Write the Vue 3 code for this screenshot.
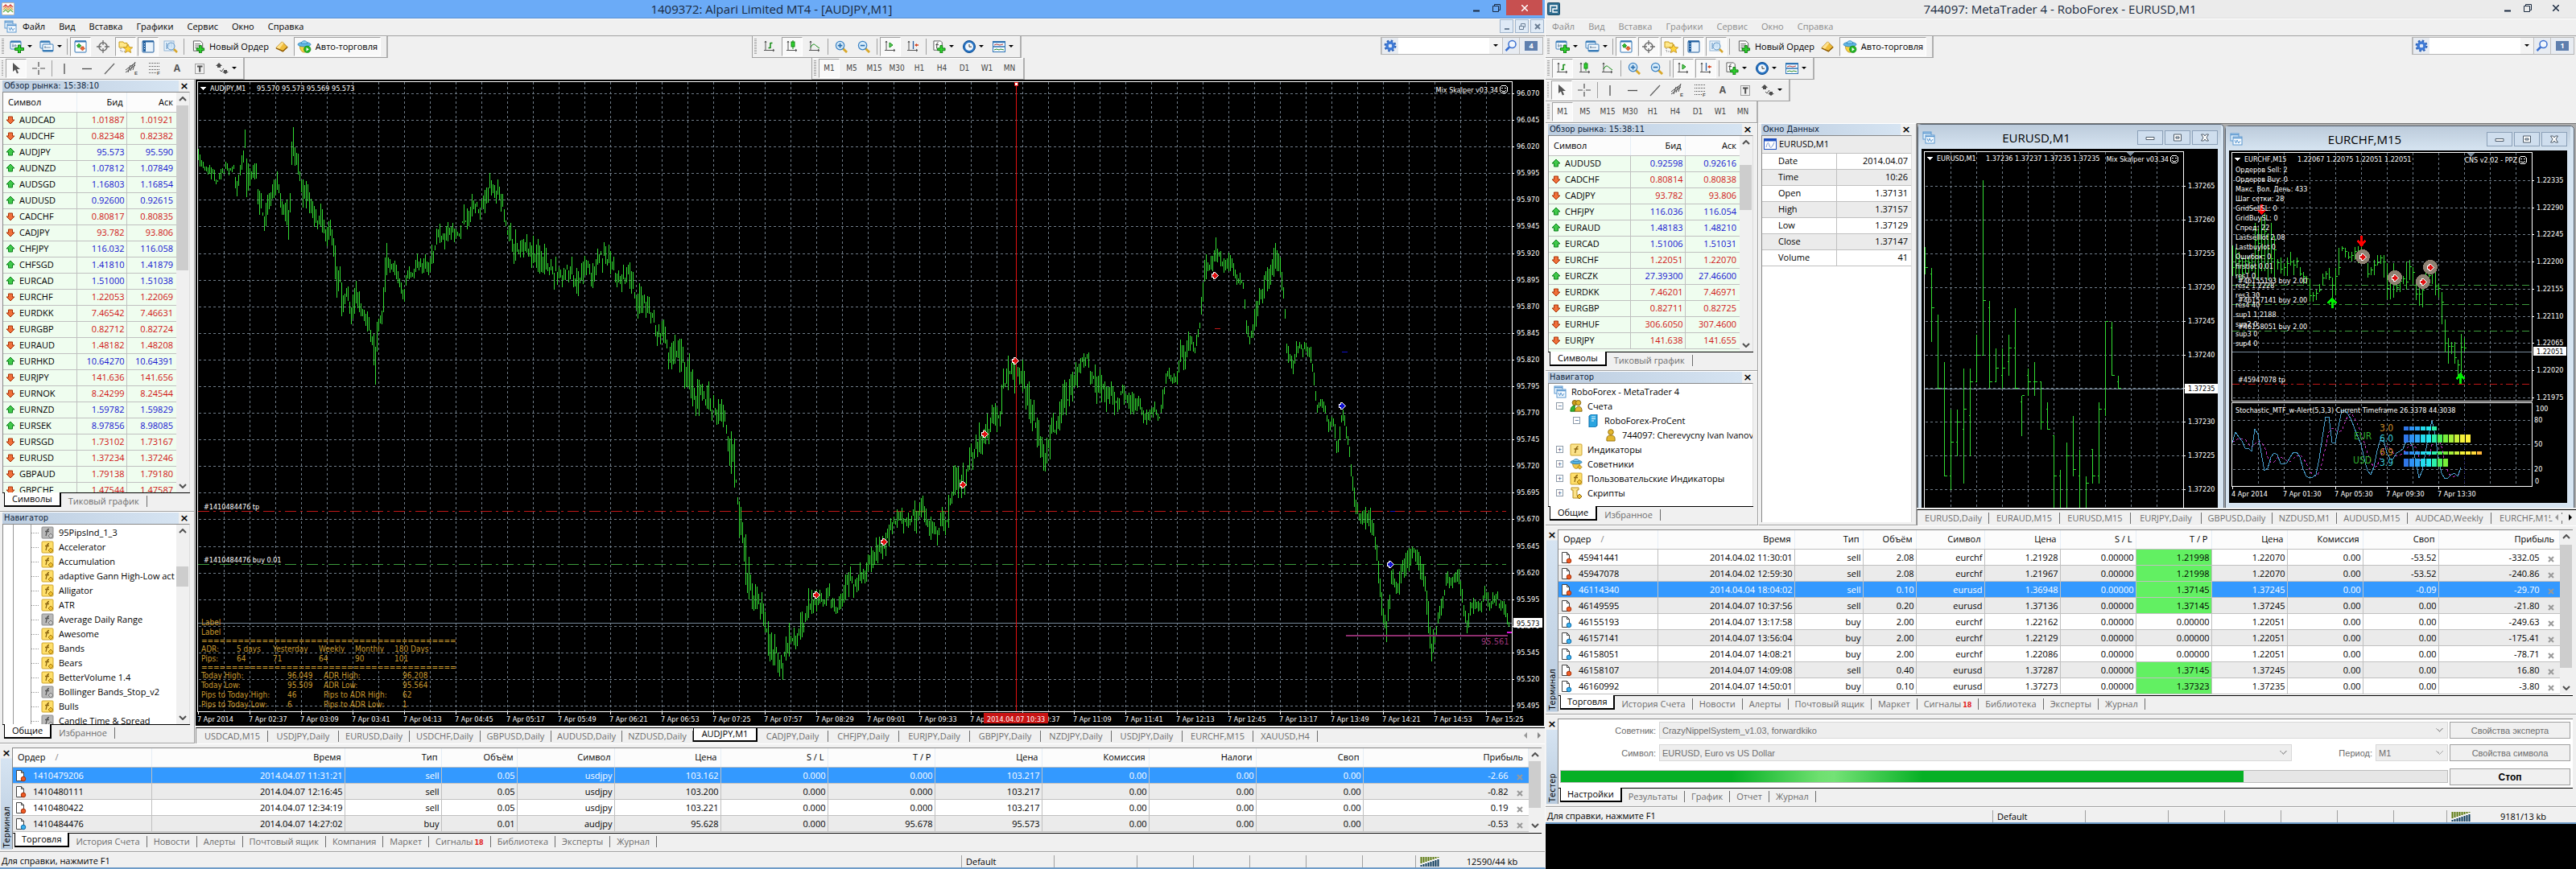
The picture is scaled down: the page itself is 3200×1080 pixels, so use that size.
<template>
  <svg class="sprite" aria-hidden="true">
    <symbol id="i-charts" viewBox="0 0 16 16">
      <rect x="1" y="1" width="10" height="9" fill="#eaf4fd" stroke="#5b97cf" />
      <path d="M1 2.5h10" stroke="#5b97cf" stroke-width="1.5" />
      <rect x="4" y="5" width="11" height="10" fill="#f6fbff" stroke="#5b97cf" />
      <path d="M4 6.5h11" stroke="#5b97cf" stroke-width="1.5" />
      <path d="M6 9l1.5 4L9 9l2 4 2-3" fill="none" stroke="#5b97cf" />
    </symbol>
    <symbol id="i-newchart" viewBox="0 0 18 16">
      <rect x="1" y="1" width="13" height="10" rx="1" fill="#f4fafe" stroke="#3b7db8" />
      <path d="M1 2h13" stroke="#3b7db8" stroke-width="2" />
      <path d="M4 4v5M3 7h6M7 5v3" stroke="#6c8aa5" />
      <path d="M10.500 6h3v3.500h4v3h-4v3.500h-3v-3.500h-4v-3h4z" fill="#2fd12f" stroke="#0b7a0b" />
    </symbol>
    <symbol id="i-profiles" viewBox="0 0 18 16">
      <rect x="1" y="1" width="12" height="9" rx="1" fill="#eaf4fd" stroke="#3b7db8" />
      <rect x="4" y="5" width="13" height="9" rx="1" fill="#f6fbff" stroke="#3b7db8" />
      <path d="M1 2h12M4 13h13" stroke="#3b7db8" stroke-width="2" />
      <path d="M7 7v3M6 9h8" stroke="#6c8aa5" />
    </symbol>
    <symbol id="i-market" viewBox="0 0 16 16">
      <rect x="1" y="1" width="14" height="14" rx="1" fill="#fff" stroke="#2f74b5" />
      <path d="M1 1.500h14" stroke="#2f74b5" stroke-width="2" />
      <path d="M6 4l3 3H7.500v2h-3V7H3z" fill="#2fbf2f" stroke="#0b7a0b" stroke-width=".6" />
      <path d="M10.500 13l-3-3H9V8h3v2h1.500z" fill="#f06a35" stroke="#a83208" stroke-width=".6" />
    </symbol>
    <symbol id="i-cross" viewBox="0 0 16 16">
      <circle cx="8" cy="8" r="5" fill="none" stroke="#6d6d6d" stroke-width="1.500" />
      <path d="M8 0v6M8 10v6M0 8h6M10 8h6" stroke="#6d6d6d" stroke-width="1.300" />
    </symbol>
    <symbol id="i-navig" viewBox="0 0 18 16">
      <path d="M1 2h5l1 1.500h4V9H1z" fill="#ffe88a" stroke="#c79a1a" />
      <path d="M3 10v4h5" stroke="#777" fill="none" stroke-dasharray="1 1" />
      <path d="M12 5l1.700 3.600 4 .4-3 2.600.9 3.900L12 13.500l-3.500 2 .9-3.900-3-2.600 4-.4z" fill="#ffd53a" stroke="#b98512" stroke-width=".8" />
    </symbol>
    <symbol id="i-term" viewBox="0 0 16 16">
      <rect x="1" y="1" width="14" height="14" rx="1" fill="#e9f3fc" stroke="#205f9f" />
      <rect x="2" y="2" width="3" height="12" fill="#1f5fa0" />
      <path d="M1 1.500h14" stroke="#205f9f" stroke-width="2" />
      <path d="M3.500 4v8" stroke="#fff" stroke-dasharray="1 2" />
    </symbol>
    <symbol id="i-tester" viewBox="0 0 18 16">
      <rect x="1" y="1" width="12" height="12" fill="#eef6fd" stroke="#8fb4d6" />
      <path d="M4 3v8M7 3v5M10 3v6" stroke="#4c86bd" />
      <circle cx="9.500" cy="7.500" r="4.500" fill="#cfe6f8" fill-opacity=".8" stroke="#5f93c4" />
      <path d="M13 11l4 4" stroke="#d7a62c" stroke-width="2.500" />
    </symbol>
    <symbol id="i-order" viewBox="0 0 16 17">
      <path d="M1 1h9l3 3v10H1z" fill="#fff" stroke="#555" />
      <path d="M3 5h7M3 7.500h7M3 10h4" stroke="#555" />
      <path d="M8.500 7h3v3.500H15v3h-3.500V17h-3v-3.500H5v-3h3.500z" fill="#2fd12f" stroke="#0b7a0b" />
    </symbol>
    <symbol id="i-gold" viewBox="0 0 17 15">
      <path d="M1 9L9 1l7 7-6 6z" fill="#f0bd3c" stroke="#a8720a" />
      <path d="M1 9l8-8 2 2-6 8z" fill="#ffe18a" />
      <path d="M1 9.500l9 4 6-5.500" fill="none" stroke="#8f5c05" stroke-width="1.500" />
    </symbol>
    <symbol id="i-auto" viewBox="0 0 18 17">
      <path d="M3 7c0 6 3 9 6 9s6-3 6-9z" fill="#f7d13d" stroke="#b48a12" stroke-width=".8" />
      <ellipse cx="9" cy="5.500" rx="8.500" ry="3" fill="#62b7e6" stroke="#2a7cb4" stroke-width=".8" />
      <path d="M5 4.500c0-5 8-5 8 0z" fill="#8ad0f2" stroke="#2a7cb4" stroke-width=".8" />
      <circle cx="13" cy="12" r="4.500" fill="#23b423" stroke="#0d7a0d" stroke-width=".6" />
      <path d="M11.700 9.500v5l3.500-2.500z" fill="#fff" />
    </symbol>
    <symbol id="i-pointer" viewBox="0 0 12 16">
      <path d="M2 1v11l3-2.500 2 5 2-1-2-4.500h4z" fill="#555" />
    </symbol>
    <symbol id="i-plus" viewBox="0 0 16 16"><path d="M8 0v6M8 10v6M0 8h6M10 8h6M8 8v.500" stroke="#4d4d4d" stroke-width="1.200" /></symbol>
    <symbol id="i-vline" viewBox="0 0 16 16"><path d="M8 2v13" stroke="#4d4d4d" stroke-width="1.300" /></symbol>
    <symbol id="i-hline" viewBox="0 0 16 16"><path d="M2 8.500h12" stroke="#4d4d4d" stroke-width="1.300" /></symbol>
    <symbol id="i-trend" viewBox="0 0 16 16"><path d="M2 15L14 2" stroke="#666" stroke-width="1.300" /></symbol>
    <symbol id="i-equi" viewBox="0 0 16 16">
      <path d="M0 13L12 4M0 10L12 1M3 13L6 4M6 11l3-8M9 10l3-10" stroke="#4d4d4d" />
      <text x="11" y="16" class="glyph">E</text>
    </symbol>
    <symbol id="i-fibo" viewBox="0 0 16 16">
      <path d="M1 1.500h14M1 5.500h14M1 9.500h14M1 13.500h9" stroke="#4d4d4d" stroke-dasharray="1 1" />
      <text x="11" y="16" class="glyph">F</text>
    </symbol>
    <symbol id="i-label" viewBox="0 0 16 16">
      <rect x="2.500" y="2.500" width="11" height="12" fill="none" stroke="#4d4d4d" stroke-dasharray="1 1" />
      <path d="M5 5.500h6.500M8.200 5v7.500" stroke="#4d4d4d" stroke-width="2" />
    </symbol>
    <symbol id="i-shapes" viewBox="0 0 16 16">
      <path d="M4 1l4 4H6v2H2V5H0zM12 15l-4-3h2v-2h4v2h2z" fill="#4d4d4d" />
      <path d="M5 10l2 2 3-4" stroke="#4d4d4d" fill="none" />
    </symbol>
    <symbol id="i-bars" viewBox="0 0 16 16">
      <path d="M3 1v12M1 12.500h13M2 3l1-2 1 2M12 11l2 1.500-2 1.500" stroke="#555" fill="none" />
      <path d="M9 3v7M9 3.500h2.500M6.500 9.500H9" stroke="#118a11" stroke-width="1.500" />
    </symbol>
    <symbol id="i-candle" viewBox="0 0 16 16">
      <path d="M3 1v12M1 12.500h13M2 3l1-2 1 2M12 11l2 1.500-2 1.500" stroke="#555" fill="none" />
      <path d="M9 0v11" stroke="#118a11" /><rect x="7" y="2" width="4" height="6" fill="#2fd12f" stroke="#118a11" />
    </symbol>
    <symbol id="i-line" viewBox="0 0 16 16">
      <path d="M3 1v12M1 12.500h13M2 3l1-2 1 2M12 11l2 1.500-2 1.500" stroke="#555" fill="none" />
      <path d="M3 9c3-6 5-4 7-2l4 3" stroke="#118a11" fill="none" />
    </symbol>
    <symbol id="i-zin" viewBox="0 0 17 17">
      <path d="M10 10l6 6" stroke="#d9a82b" stroke-width="3" />
      <circle cx="7" cy="7" r="5.500" fill="#d8edfb" stroke="#3d83c4" stroke-width="1.300" /><path d="M4 7h6M7 4v6" stroke="#2a6fb0" stroke-width="1.800" />
    </symbol>
    <symbol id="i-zout" viewBox="0 0 17 17">
      <path d="M10 10l6 6" stroke="#d9a82b" stroke-width="3" />
      <circle cx="7" cy="7" r="5.500" fill="#d8edfb" stroke="#3d83c4" stroke-width="1.300" /><path d="M4 7h6" stroke="#2a6fb0" stroke-width="1.800" />
    </symbol>
    <symbol id="i-scroll" viewBox="0 0 16 16">
      <path d="M3 1v12M1 12.500h13M2 3l1-2 1 2M12 11l2 1.500-2 1.500" stroke="#555" fill="none" />
      <path d="M7 3v6l4-3z" fill="#5fd35f" stroke="#118a11" />
    </symbol>
    <symbol id="i-shift" viewBox="0 0 16 16">
      <path d="M3 1v12M1 12.500h13M2 3l1-2 1 2M12 11l2 1.500-2 1.500" stroke="#555" fill="none" />
      <path d="M8.500 1v10" stroke="#2a5fa0" stroke-width="1.300" /><path d="M10 6l3-2v1.300h2v1.400h-2V8z" fill="#d4401a" />
    </symbol>
    <symbol id="i-indic" viewBox="0 0 17 17">
      <path d="M1 1h9l2 2v10H1z" fill="#fff" stroke="#555" /><path d="M7 3c-2 0-2 2-2 4v4M3.500 6h4" stroke="#333" fill="none" />
      <path d="M9.500 7h3v3.500H16v3h-3.500V17h-3v-3.500H6v-3h3.500z" fill="#2fd12f" stroke="#0b7a0b" />
    </symbol>
    <symbol id="i-clock" viewBox="0 0 16 16">
      <circle cx="8" cy="8" r="7.500" fill="#2874c4" stroke="#0f4d8f" /><circle cx="8" cy="8" r="5" fill="#f2f8fd" />
      <path d="M8 5v3.200h3" stroke="#333" fill="none" />
    </symbol>
    <symbol id="i-templ" viewBox="0 0 16 14">
      <rect x=".5" y=".5" width="15" height="13" fill="#f6fbff" stroke="#2f74b5" /><path d="M0 1.500h16M0 7h16" stroke="#2f74b5" stroke-width="1.500" />
      <path d="M2 5l3-1 4 1 4-1" stroke="#b04040" fill="none" /><path d="M2 11l3-1 3 1 2-1 4 1" stroke="#2a8a2a" fill="none" />
    </symbol>
    <symbol id="i-gear" viewBox="0 0 16 16">
      <circle cx="8" cy="8" r="6" fill="none" stroke="#2d62b8" stroke-width="3" stroke-dasharray="2.400 2.310" />
      <circle cx="8" cy="8" r="4" fill="none" stroke="#3f7ad6" stroke-width="3.500" /><circle cx="8" cy="8" r="2" fill="#dce9fb" />
    </symbol>
    <symbol id="i-find" viewBox="0 0 16 16">
      <circle cx="9.500" cy="6" r="4.500" fill="#f2f7fe" stroke="#3a6fd0" stroke-width="1.500" /><path d="M6 9.500L1.500 14" stroke="#3a6fd0" stroke-width="2.500" />
    </symbol>
    <symbol id="i-up" viewBox="0 0 12 12">
      <path d="M6 1l5 5H8.500v4h-5V6H1z" fill="#3fc94a" stroke="#0f7f1c" />
    </symbol>
    <symbol id="i-down" viewBox="0 0 12 12">
      <path d="M6 11L1 6h2.500V2h5v4H11z" fill="#f0703a" stroke="#a83208" />
    </symbol>
    <symbol id="i-fx" viewBox="0 0 16 16">
      <rect x="1" y="1" width="14" height="14" rx="1" fill="#ffdf6a" stroke="#cfa52c" />
      <path d="M10 3.500c-3 0-2.500 3-4 8.500M5 6.500h5" stroke="#8a6410" stroke-width="1.300" fill="none" />
      <path d="M12 9l3 3-3 3-3-3z" fill="#f0c030" stroke="#a87c10" />
    </symbol>
    <symbol id="i-fxg" viewBox="0 0 16 16">
      <rect x="1" y="1" width="14" height="14" rx="1" fill="#b9b9b9" stroke="#8d8d8d" />
      <path d="M10 3.500c-3 0-2.500 3-4 8.500M5 6.500h5" stroke="#555" stroke-width="1.300" fill="none" />
      <path d="M12 9l3 3-3 3-3-3z" fill="#c8c8c8" stroke="#777" />
    </symbol>
    <symbol id="i-fx0" viewBox="0 0 16 16">
      <rect x="1" y="1" width="14" height="14" rx="1" fill="#fbe28a" stroke="#cfa52c" />
      <path d="M10.500 4c-3 0-2.500 3-4 8M5.500 7h5" stroke="#8a6410" stroke-width="1.300" fill="none" />
    </symbol>
    <symbol id="i-sell" viewBox="0 0 14 16">
      <path d="M1.500 1.500h6l3 3v10h-9z" fill="#fff" stroke="#444" /><path d="M7.500 1.500v3h3" fill="none" stroke="#444" /><circle cx="10" cy="12" r="2.800" fill="#ee5a24" stroke="#a83208" />
    </symbol>
    <symbol id="i-buy" viewBox="0 0 14 16">
      <path d="M1.500 1.500h6l3 3v10h-9z" fill="#fff" stroke="#444" /><path d="M7.500 1.500v3h3" fill="none" stroke="#444" /><circle cx="10" cy="12" r="2.800" fill="#38b0ee" stroke="#0d6aa8" />
    </symbol>
    <symbol id="i-users" viewBox="0 0 18 18">
      <circle cx="7" cy="4" r="3.500" fill="#c99a1c" stroke="#7a5a08" /><circle cx="12" cy="4" r="3.500" fill="#e3b72e" stroke="#7a5a08" />
      <path d="M1 16c0-6 3-8 6-8v8z" fill="#35b435" stroke="#0d7a0d" /><path d="M7 16c0-7 10-11 10 0z" fill="#e3b72e" stroke="#7a5a08" />
    </symbol>
    <symbol id="i-user" viewBox="0 0 16 16">
      <circle cx="8" cy="4" r="3.300" fill="#e3b72e" stroke="#9c7612" /><path d="M3 15c-1-7 3-7 5-7s6 0 5 7z" fill="#e3b72e" stroke="#9c7612" />
    </symbol>
    <symbol id="i-server" viewBox="0 0 14 16">
      <path d="M2 2l3-2h7v14l-3 2H2z" fill="#2aa5e0" stroke="#0d6aa8" /><path d="M5 3h5M5 5.500h5M5 8h3" stroke="#e6f6ff" />
    </symbol>
    <symbol id="i-hat" viewBox="0 0 18 16">
      <path d="M4 6c0 5 2 8 5 8s5-3 5-8z" fill="#f2c94a" stroke="#a87c10" stroke-width=".8" /><ellipse cx="9" cy="5" rx="8" ry="2.600" fill="#52b2e4" stroke="#22709f" stroke-width=".8" />
      <path d="M5 4c0-4.500 8-4.500 8 0z" fill="#86cff2" stroke="#22709f" stroke-width=".8" /><path d="M14 9l3 3-3 3-3-3z" fill="#f0c030" stroke="#8a6410" stroke-width=".8" />
    </symbol>
    <symbol id="i-script" viewBox="0 0 16 16">
      <path d="M2 1h9v3H9v7h3v3H4V4H2z" fill="#fbe28a" stroke="#b8901e" /><path d="M12 9l3 3-3 3-3-3z" fill="#f0c030" stroke="#8a6410" />
    </symbol>
    <symbol id="i-wave" viewBox="0 0 16 14">
      <rect x=".5" y=".5" width="15" height="13" fill="#fff" stroke="#1d4fbf" /><path d="M0 2h16" stroke="#1d4fbf" stroke-width="3" /><path d="M3 11c2-8 3-6 4-2s3 3 6-4" stroke="#6d8ccf" fill="none" />
    </symbol>
    <symbol id="i-conn" viewBox="0 0 24 12">
      <path d="M1.500 0v8M4.500 0v7M7.500 0v6M10.500 0v5M13.500 0v4M16.500 0v3M19.500 0v2M22.500 0v1" stroke="#5d7a10" stroke-width="2" />
      <path d="M1.500 12v-2M4.500 12V9M7.500 12V8M10.500 12V7M13.500 12V6M16.500 12V5M19.500 12V4M22.500 12V3" stroke="#0c3a5c" stroke-width="2" />
    </symbol>
    <symbol id="i-smile" viewBox="0 0 12 12">
      <circle cx="6" cy="6" r="5" fill="none" stroke="#fff" /><circle cx="4" cy="4.500" r=".8" fill="#fff" /><circle cx="8" cy="4.500" r=".8" fill="#fff" /><path d="M3 7c1 2.500 5 2.500 6 0" fill="none" stroke="#fff" />
    </symbol>
    <symbol id="i-deal" viewBox="0 0 9 9"><path d="M2.500 2.500V.500h2L8.500 4.500 4.500 8.500h-2v-2h-2v-4z" fill="currentColor" stroke="#fff" /></symbol>
  </svg>

  <div class="desktop">
    <main v-for="app in apps" :key="app.id" class="slot">
      <section class="app" :class="app.id">
        <header class="titlebar">
          <span class="logo"><svg viewBox="0 0 16 16" width="16" height="16">
            <g v-if="app.id === 'left'">
              <rect x=".5" y=".5" width="15" height="15" rx="1" fill="#fff" stroke="#c9b8a0" />
              <path d="M2 6l3-3 3 3 3-3 3 3" fill="none" stroke="#d9534a" stroke-width="1.500" /><path d="M2 9l3-3 3 3 3-3 3 3" fill="none" stroke="#e0a040" stroke-width="1.300" /><path d="M2 12l3-3 3 3 3-3 3 3" fill="none" stroke="#6ab04a" stroke-width="1.300" />
            </g>
            <g v-else>
              <rect x=".5" y=".5" width="15" height="15" rx="1" fill="#2f6d90" stroke="#1c4c68" />
              <path d="M4 12V4h8v4H7v4h6" fill="none" stroke="#fff" stroke-width="1.500" />
            </g>
          </svg></span>
          <h1>{{ app.title }}</h1>
          <div class="wbtns">
            <button aria-label="Свернуть"><svg width="10" height="10"><path d="M1 8.500h8" stroke="currentColor" stroke-width="2" /></svg></button>
            <button aria-label="Развернуть"><svg width="10" height="10"><path d="M.500 2.500h7v7h-7zM2.500 2V.500h7v7H8" fill="none" stroke="currentColor" /></svg></button>
            <button class="shut" aria-label="Закрыть"><svg width="8" height="8"><path d="M0 0l8 8M8 0L0 8" stroke="currentColor" stroke-width="1.500" /></svg></button>
          </div>
        </header>
        <nav class="menu">
          <svg v-if="app.id === 'left'" class="ic" width="16" height="16"><use href="#i-charts" /></svg>
          <button v-for="m in menu" :key="m">{{ m }}</button>
          <div v-if="app.id === 'left'" class="mdi">
            <button aria-label="Свернуть график"><svg width="8" height="8"><path d="M1 7h6" stroke="#6b7f95" stroke-width="2" /></svg></button>
            <button aria-label="Восстановить график"><svg width="8" height="8"><path d="M.500 3.500h5v4h-5zM2.500 3V.500h5v4H6" fill="none" stroke="#6b7f95" /></svg></button>
            <button aria-label="Закрыть график"><svg width="8" height="8"><path d="M1 1l6 6M7 1L1 7" stroke="#6b7f95" stroke-width="2" /></svg></button>
          </div>
        </nav>
        <div v-for="(row, ri) in app.bands" :key="ri" class="band">
          <div v-for="bar in row" :key="bar" class="bar" :class="bar">
            <i class="grip"></i>
            <template v-for="(b, bi) in bars[bar]" :key="bi">
              <i v-if="b.sep" class="sep"></i>
              <button v-else :class="{ on: app.pressed.includes(b.i || b.t), caret: b.c, wide: b.w, order: b.i === 'order' }" :aria-label="b.t || b.i">
                <svg v-if="b.i" :width="b.s || 16" height="16"><use :href="'#i-' + b.i" /></svg>
                <span v-if="b.t">{{ b.t }}</span>
                <svg v-if="b.c" class="car" width="6" height="4"><path d="M0 0h6L3 3z" /></svg>
              </button>
            </template>
          </div>
          <div v-if="ri === 0" class="search">
            <button aria-label="Настройки"><svg width="16" height="16"><use href="#i-gear" /></svg></button>
            <input type="text" aria-label="Поиск" />
            <button class="drop" aria-label="Список"><svg width="6" height="4"><path d="M0 0h6L3 3z" /></svg></button>
            <button aria-label="Найти"><svg width="16" height="16"><use href="#i-find" /></svg></button>
            <button class="chat" aria-label="Сообщения"><b>{{ app.msgs }}</b></button>
          </div>
        </div>

        <div class="work">
          <div class="dock">
            <section class="panel watch">
              <h2><span>Обзор рынка: {{ app.clock }}</span><button aria-label="Закрыть">×</button></h2>
              <div class="body scrolls">
                <div class="clip">
                  <table class="grid">
                    <colgroup><col class="c1" /><col class="c2" /><col /></colgroup>
                    <thead><tr><th>Символ</th><th>Бид</th><th>Аск</th></tr></thead>
                    <tbody>
                      <tr v-for="q in app.quotes" :key="q[1]" :class="q[0]">
                        <td><svg width="12" height="12"><use :href="'#i-' + q[0]" /></svg>{{ q[1] }}</td><td>{{ q[2] }}</td><td>{{ q[3] }}</td>
                      </tr>
                    </tbody>
                  </table>
                </div>
                <div class="vscroll"><svg width="10" height="6"><path d="M1 5l4-4 4 4" /></svg><i class="thumb"></i><svg width="10" height="6"><path d="M1 1l4 4 4-4" /></svg></div>
              </div>
              <div class="tabs"><button class="cur">Символы</button><button>Тиковый график</button></div>
            </section>
            <section class="panel navi">
              <h2><span>Навигатор</span><button aria-label="Закрыть">×</button></h2>
              <div class="body scrolls">
                <ul v-if="app.id === 'left'" class="tree flat">
                  <li v-for="n in indicators" :key="n[1]"><svg width="16" height="16"><use :href="'#i-' + n[0]" /></svg>{{ n[1] }}</li>
                </ul>
                <ul v-else class="tree">
                  <li v-for="n in tree" :key="n.t" :class="'lv' + n.l"><i v-if="n.x" class="box">{{ n.x }}</i><svg width="16" height="16"><use :href="'#i-' + n.i" /></svg>{{ n.t }}</li>
                </ul>
                <div v-if="app.id === 'left'" class="vscroll"><svg width="10" height="6"><path d="M1 5l4-4 4 4" /></svg><i class="thumb"></i><svg width="10" height="6"><path d="M1 1l4 4 4-4" /></svg></div>
              </div>
              <div class="tabs"><button class="cur">Общие</button><button>Избранное</button></div>
            </section>
          </div>

          <section v-if="app.id === 'right'" class="panel datawin">
            <h2><span>Окно Данных</span><button aria-label="Закрыть">×</button></h2>
            <div class="body">
              <table class="data">
                <thead><tr><th colspan="2"><svg width="16" height="14"><use href="#i-wave" /></svg>EURUSD,M1</th></tr></thead>
                <tbody><tr v-for="d in dataRows" :key="d[0]"><td>{{ d[0] }}</td><td>{{ d[1] }}</td></tr></tbody>
              </table>
            </div>
          </section>

          <div class="stage">
            <div v-if="app.id === 'left'" class="solo">
              <svg class="chart" width="100%" height="100%">
                <g transform="translate(-243 -99)">
                  <path class="gl" :d="mainGrid" />
                  <path d="M246 774.500H1878" stroke="#778899" />
                  <path d="M246 635.500H1871" stroke="#c01818" stroke-dasharray="14 5 3 5" />
                  <path d="M246 701.500H1871" stroke="#3c9a3c" stroke-dasharray="14 5 3 5" />
                  <path class="px" :d="mainBars" />
                  <path d="M1672 790H1873" stroke="#8e2e6e" stroke-width="2" />
                  <path d="M1872 786h6" stroke="#e010e0" stroke-width="2" />
                  <text x="1840" y="801" class="lvl">95.561</text>
                  <path d="M1262.500 102V884" stroke="#e01010" />
                  <rect x="1260.500" y="102.500" width="4" height="4" fill="#fff" stroke="#e01010" />
                  <path d="M1509 408.500h7" stroke="#c01818" /><path d="M1667 437.500h7M1727 635.500h6" stroke="#1010c8" />
                  <use v-for="(m, k) in deals" :key="k" href="#i-deal" :x="m[0] - 4" :y="m[1] - 4" width="9" height="9" :style="{ color: m[2] }" />
                  <path d="M245.500 884.500V101.500H1878.500V884.500z" fill="none" stroke="#fff" />
                  <path :d="mainTicks" stroke="#fff" />
                  <g class="tx">
                    <path d="M249 108h7l-3.500 4z" />
                    <text x="261" y="113">AUDJPY,M1</text>
                    <text v-for="(p, k) in mainHead" :key="k" :x="319 + k * 31" y="113">{{ p }}</text>
                    <text x="1861" y="115" text-anchor="end">Mix Skalper v03.34</text>
                    <use href="#i-smile" x="1862" y="105" width="12" height="12" />
                    <text v-for="(p, k) in mainPrices" :key="p" x="1884" :y="119 + k * 33.09">{{ p }}</text>
                    <rect x="1880" y="768" width="36" height="12" />
                    <text x="1884" y="778" class="dk">95.573</text>
                    <text v-for="(t, k) in mainTimes" :key="t" :x="245 + k * 64" y="897">{{ t }}</text>
                    <rect x="1222" y="886" width="80" height="13" fill="#c81414" />
                    <text x="1226" y="897">2014.04.07 10:33</text>
                    <text x="253" y="633">#1410484476 tp</text>
                    <text x="253" y="699">#1410484476 buy 0.01</text>
                  </g>
                  <g class="adr"><text v-for="(a, k) in adr" :key="k" :x="a[0]" :y="a[1]">{{ a[2] }}</text></g>
                </g>
              </svg>
            </div>
            <div v-else class="mdiarea">
              <section class="child w1">
                <header><svg width="16" height="16"><use href="#i-charts" /></svg><h3>EURUSD,M1</h3><div class="cb"><button v-for="g in childBtns" :key="g[0]" :aria-label="g[0]"><svg width="12" height="10"><path :d="g[1]" /></svg></button></div></header>
                <svg class="chart" width="100%" height="100%">
                  <g transform="translate(-2387 -183)">
                    <path class="gl" :d="eurusdGrid" />
                    <path d="M2391 481.500H2712" stroke="#778899" />
                    <path class="px" :d="eurusdBars" />
                    <path d="M2390.500 640V186.500H2712.500V640" fill="none" stroke="#fff" />
                    <path :d="eurusdTicks" stroke="#fff" />
                    <path d="M2642 187h9l-4.500 5z" fill="#778899" />
                    <g class="tx">
                      <path d="M2394 193h7l-3.500 4z" />
                      <text x="2406" y="198">EURUSD,M1</text>
                      <text v-for="(p, k) in usdHead" :key="k" :x="2467 + k * 36" y="198">{{ p }}</text>
                      <text x="2694" y="199" text-anchor="end">Mix Skalper v03.34</text>
                      <use href="#i-smile" x="2695" y="190" width="12" height="12" />
                      <text v-for="(p, k) in eurusdPrices" :key="p" x="2718" :y="232 + k * 41.9">{{ p }}</text>
                      <rect x="2714" y="475" width="41" height="12" />
                      <text x="2718" y="484" class="dk">1.37235</text>
                    </g>
                  </g>
                </svg>
              </section>
              <section class="child w2">
                <header><svg width="16" height="16"><use href="#i-charts" /></svg><h3>EURCHF,M15</h3><div class="cb"><button v-for="g in childBtns" :key="g[0]" :aria-label="g[0]"><svg width="12" height="10"><path :d="g[1]" /></svg></button></div></header>
                <svg class="chart" width="100%" height="100%">
                  <g transform="translate(-2769 -187)">
                    <path class="gl" :d="eurchfGrid" />
                    <path d="M2773 437.500H3146" stroke="#778899" />
                    <path d="M2773 354.500H3142M2773 378.500H3142M2773 411.500H3142" stroke="#3c9a3c" stroke-dasharray="9 4 3 4" />
                    <path d="M2773 477.500H3142" stroke="#c01818" stroke-dasharray="9 4 3 4" />
                    <path class="px" :d="eurchfBars" />
                    <circle v-for="(c, k) in spots" :key="k" :cx="c[0]" :cy="c[1]" r="9" fill="#8e8172" />
                    <use v-for="(c, k) in spots" :key="'s' + k" href="#i-deal" :x="c[0] - 4" :y="c[1] - 4" width="9" height="9" class="sd" />
                    <path d="M2808 254v7h-4l5.500 6 5.500-6h-4v-7z" fill="#f00" />
                    <path d="M2933.500 293v11M2928.500 299l5 5.500 5-5.500" stroke="#f00" stroke-width="3" fill="none" />
                    <path d="M2897 383v-11M2892 377l5-5.500 5 5.500M3056.500 477v-11M3051.500 471l5-5.500 5 5.500" stroke="#0e0" stroke-width="3" fill="none" />
                    <path :d="stochSlow" fill="none" stroke="#c030c0" stroke-dasharray="3 3" />
                    <path :d="stochFast" fill="none" stroke="#48a0d0" />
                    <path d="M3061.500 531V604" stroke="#1a1a5a" stroke-dasharray="3 3" />
                    <rect v-for="(r, k) in meters" :key="'m' + k" :x="r.x" :y="r.y" width="6" :height="r.h" :fill="r.f" />
                    <g class="big">
                      <text x="2924" y="546" fill="#2fae2f">EUR</text><text x="2923" y="576" fill="#2fae2f">USD</text>
                      <text x="2956" y="536" fill="#c88a2a">3.0</text><text x="2956" y="549" fill="#3cc8d8">6.0</text>
                      <text x="2956" y="566" fill="#c88a2a">6.9</text><text x="2956" y="579" fill="#3cc8d8">3.9</text>
                    </g>
                    <path d="M2772.500 189.500H3145.500V498.500H2772.500zM2772.500 500.500H3145.500V604.500H2772.500z" fill="none" stroke="#fff" />
                    <path :d="eurchfTicks" stroke="#fff" />
                    <path d="M3065 190h9l-4.500 5z" fill="#778899" />
                    <g class="tx">
                      <path d="M2776 196h7l-3.500 4z" />
                      <text x="2788" y="201">EURCHF,M15</text>
                      <text v-for="(p, k) in chfHead" :key="k" :x="2854 + k * 36" y="201">{{ p }}</text>
                      <text x="3127" y="202" text-anchor="end">CNS v2.02 - PPZ</text>
                      <use href="#i-smile" x="3128" y="193" width="12" height="12" />
                      <text v-for="(c, k) in comments" :key="c" x="2777" :y="214 + k * 12">{{ c }}</text>
                      <text x="2780" y="352">#46155193 buy 2.00</text><text x="2780" y="376">#46157141 buy 2.00</text>
                      <text x="2780" y="409">#46158051 buy 2.00</text><text x="2780" y="475">#45947078 tp</text>
                      <text v-for="(p, k) in eurchfPrices" :key="p" x="3151" :y="227 + k * 33.7">{{ p }}</text>
                      <rect x="3147" y="431" width="41" height="11" /><text x="3151" y="440" class="dk">1.22051</text>
                      <text x="2777" y="513">Stochastic_MTF_w-Alert(5,3,3) Current Timeframe 26.3378 44.3038</text>
                      <text x="3150" y="511">100</text><text x="3148" y="525">80</text><text x="3148" y="555">50</text><text x="3148" y="586">20</text><text x="3149" y="601">0</text>
                      <text v-for="(t, k) in chfTimes" :key="t" :x="2772 + k * 64" y="617">{{ t }}</text>
                    </g>
                  </g>
                </svg>
              </section>
            </div>
            <div class="tabs charts">
              <button v-for="(t, k) in app.chartTabs" :key="k" :class="{ cur: t === app.current, short: t.length < 10, long: t.length > 12 }">{{ t }}</button>
              <span class="arr"><svg width="24" height="8"><path d="M4 0v8L0 4z" fill="#999" /><path d="M17 0v8l4-4z" :fill="app.id === 'left' ? '#888' : '#000'" /></svg></span>
            </div>
          </div>
        </div>

        <section class="toolbox">
          <div class="side"><button aria-label="Закрыть">×</button><h2>Терминал</h2></div>
          <div class="main">
            <div class="scrolls tablewrap">
              <table class="orders">
                <colgroup><col v-for="(w, k) in app.cols" :key="k" :style="{ width: w + 'px' }" /><col /></colgroup>
                <thead><tr><th v-for="(h, k) in app.heads" :key="k">{{ h }}<i v-if="k === 0" class="slash">/</i></th></tr></thead>
                <tbody>
                  <tr v-for="o in app.orders" :key="o[0]" :class="{ sel: o[0] === app.selected }">
                    <td v-for="(c, k) in o" :key="k" :class="{ hit: app.id === 'right' && k === 7 && c !== '0.00000' }"><svg v-if="k === 0" width="14" height="16"><use :href="'#i-' + o[2]" /></svg>{{ c }}<button v-if="k === o.length - 1" class="del" aria-label="Закрыть ордер"><svg width="8" height="8"><path d="M1 1l6 6M7 1L1 7" /></svg></button></td>
                  </tr>
                </tbody>
              </table>
              <div class="vscroll"><svg width="10" height="6"><path d="M1 5l4-4 4 4" /></svg><i class="thumb"></i><svg width="10" height="6"><path d="M1 1l4 4 4-4" /></svg></div>
            </div>
            <div class="tabs"><button v-for="(t, k) in app.termTabs" :key="t" :class="{ cur: k === 0 }">{{ t }}<sub v-if="t === 'Сигналы'">18</sub></button></div>
          </div>
        </section>

        <section v-if="app.id === 'right'" class="toolbox tester">
          <div class="side"><button aria-label="Закрыть">×</button><h2>Тестер</h2></div>
          <div class="main">
            <form class="form" @submit.prevent>
              <label for="expert">Советник:</label>
              <select id="expert" class="ex" disabled><option>CrazyNippelSystem_v1.03, forwardkiko</option></select>
              <button disabled>Свойства эксперта</button>
              <label for="symbol">Символ:</label>
              <select id="symbol" disabled><option>EURUSD, Euro vs US Dollar</option></select>
              <label for="period">Период:</label>
              <select id="period" disabled><option>M1</option></select>
              <button disabled>Свойства символа</button>
              <div class="progress" role="progressbar" aria-valuenow="77"><i></i></div>
              <button class="stop">Стоп</button>
            </form>
            <div class="tabs"><button v-for="(t, k) in testTabs" :key="t" :class="{ cur: k === 0 }">{{ t }}</button></div>
          </div>
        </section>

        <footer class="status">
          <span class="help">Для справки, нажмите F1</span>
          <span class="cell def">Default</span>
          <span v-for="k in 6" :key="k" class="cell" :class="'s' + k"></span>
          <span class="cell net"><svg width="24" height="12"><use href="#i-conn" /></svg><em>{{ app.traffic }}</em></span>
        </footer>
      </section>
    </main>
  </div>
</template>

<script setup>
const menu = ['Файл', 'Вид', 'Вставка', 'Графики', 'Сервис', 'Окно', 'Справка']

const sep = { sep: true }
const bars = {
  std: [
    { i: 'newchart', c: 1, s: 18 }, { i: 'profiles', c: 1, s: 18 }, sep,
    { i: 'market' }, { i: 'cross' }, { i: 'navig', s: 18 }, { i: 'term' }, { i: 'tester', s: 18 }, sep,
    { i: 'order', t: 'Новый Ордер', w: 1 }, { i: 'gold' }, { i: 'auto', t: 'Авто-торговля', s: 18, w: 1 }
  ],
  draw: [
    { i: 'pointer' }, { i: 'plus' }, sep, { i: 'vline' }, { i: 'hline' }, { i: 'trend' }, { i: 'equi' }, { i: 'fibo' },
    { t: 'A' }, { i: 'label' }, { i: 'shapes', c: 1 }
  ],
  view: [
    { i: 'bars' }, { i: 'candle' }, { i: 'line' }, sep, { i: 'zin' }, { i: 'zout' }, sep, { i: 'scroll' }, { i: 'shift' }, sep,
    { i: 'indic', c: 1 }, { i: 'clock', c: 1 }, { i: 'templ', c: 1 }
  ],
  tf: ['M1', 'M5', 'M15', 'M30', 'H1', 'H4', 'D1', 'W1', 'MN'].map(t => ({ t }))
}

const rows = s => s.trim().split('\n').map(l => l.trim().split(/\s*\|\s*/))

const leftQuotes = rows(`
  down|AUDCAD|1.01887|1.01921
  down|AUDCHF|0.82348|0.82382
  up|AUDJPY|95.573|95.590
  up|AUDNZD|1.07812|1.07849
  up|AUDSGD|1.16803|1.16854
  up|AUDUSD|0.92600|0.92615
  down|CADCHF|0.80817|0.80835
  down|CADJPY|93.782|93.806
  up|CHFJPY|116.032|116.058
  up|CHFSGD|1.41810|1.41879
  up|EURCAD|1.51000|1.51038
  down|EURCHF|1.22053|1.22069
  down|EURDKK|7.46542|7.46631
  down|EURGBP|0.82712|0.82724
  down|EURAUD|1.48182|1.48208
  up|EURHKD|10.64270|10.64391
  down|EURJPY|141.636|141.656
  down|EURNOK|8.24299|8.24544
  up|EURNZD|1.59782|1.59829
  up|EURSEK|8.97856|8.98085
  down|EURSGD|1.73102|1.73167
  down|EURUSD|1.37234|1.37246
  down|GBPAUD|1.79138|1.79180
  down|GBPCHF|1.47544|1.47587`)

const rightQuotes = rows(`
  up|AUDUSD|0.92598|0.92616
  down|CADCHF|0.80814|0.80838
  down|CADJPY|93.782|93.806
  up|CHFJPY|116.036|116.054
  up|EURAUD|1.48183|1.48210
  up|EURCAD|1.51006|1.51031
  down|EURCHF|1.22051|1.22070
  up|EURCZK|27.39300|27.46600
  down|EURDKK|7.46201|7.46971
  down|EURGBP|0.82711|0.82725
  down|EURHUF|306.6050|307.4600
  down|EURJPY|141.638|141.655`)

const apps = [
  {
    id: 'left', title: '1409372: Alpari Limited MT4 - [AUDJPY,M1]', clock: '15:38:10', msgs: '4',
    bands: [['std', 'view'], ['draw', 'tf']],
    pressed: ['market', 'navig', 'term', 'auto', 'pointer', 'candle', 'scroll', 'M1'],
    quotes: leftQuotes,
    chartTabs: ['USDCAD,M15', 'USDJPY,Daily', 'EURUSD,Daily', 'USDCHF,Daily', 'GBPUSD,Daily', 'AUDUSD,Daily', 'NZDUSD,Daily', 'AUDJPY,M1', 'CADJPY,Daily', 'CHFJPY,Daily', 'EURJPY,Daily', 'GBPJPY,Daily', 'NZDJPY,Daily', 'USDJPY,Daily', 'EURCHF,M15', 'XAUUSD,H4'],
    current: 'AUDJPY,M1',
    cols: [172, 240, 120, 94, 121, 132, 133, 133, 133, 133, 133, 133],
    heads: ['Ордер', 'Время', 'Тип', 'Объём', 'Символ', 'Цена', 'S / L', 'T / P', 'Цена', 'Комиссия', 'Налоги', 'Своп', 'Прибыль'],
    selected: '1410479206',
    orders: rows(`
      1410479206|2014.04.07 11:31:21|sell|0.05|usdjpy|103.162|0.000|0.000|103.217|0.00|0.00|0.00|-2.66
      1410480111|2014.04.07 12:16:45|sell|0.05|usdjpy|103.200|0.000|0.000|103.217|0.00|0.00|0.00|-0.82
      1410480422|2014.04.07 12:34:19|sell|0.05|usdjpy|103.221|0.000|0.000|103.217|0.00|0.00|0.00|0.19
      1410484476|2014.04.07 14:27:02|buy|0.01|audjpy|95.628|0.000|95.678|95.573|0.00|0.00|0.00|-0.53`),
    termTabs: ['Торговля', 'История Счета', 'Новости', 'Алерты', 'Почтовый ящик', 'Компания', 'Маркет', 'Сигналы', 'Библиотека', 'Эксперты', 'Журнал'],
    traffic: '12590/44 kb'
  },
  {
    id: 'right', title: '744097: MetaTrader 4 - RoboForex - EURUSD,M1', clock: '15:38:11', msgs: '1',
    bands: [['std'], ['view'], ['draw'], ['tf']],
    pressed: ['market', 'cross', 'navig', 'term', 'tester', 'auto', 'bars', 'scroll', 'shift', 'pointer', 'M1'],
    quotes: rightQuotes,
    chartTabs: ['EURUSD,Daily', 'EURAUD,M15', 'EURUSD,M15', 'EURJPY,Daily', 'GBPUSD,Daily', 'NZDUSD,M1', 'AUDUSD,M15', 'AUDCAD,Weekly', 'EURCHF,M15'],
    current: '',
    cols: [123, 170, 85, 66, 85, 94, 94, 94, 94, 94, 94],
    heads: ['Ордер', 'Время', 'Тип', 'Объём', 'Символ', 'Цена', 'S / L', 'T / P', 'Цена', 'Комиссия', 'Своп', 'Прибыль'],
    selected: '46114340',
    orders: rows(`
      45941441|2014.04.02 11:30:01|sell|2.08|eurchf|1.21928|0.00000|1.21998|1.22070|0.00|-53.52|-332.05
      45947078|2014.04.02 12:59:30|sell|2.08|eurchf|1.21967|0.00000|1.21998|1.22070|0.00|-53.52|-240.86
      46114340|2014.04.04 18:04:02|sell|0.10|eurusd|1.36948|0.00000|1.37145|1.37245|0.00|-0.09|-29.70
      46149595|2014.04.07 10:37:56|sell|0.20|eurusd|1.37136|0.00000|1.37145|1.37245|0.00|0.00|-21.80
      46155193|2014.04.07 13:17:58|buy|2.00|eurchf|1.22162|0.00000|0.00000|1.22051|0.00|0.00|-249.63
      46157141|2014.04.07 13:56:04|buy|2.00|eurchf|1.22129|0.00000|0.00000|1.22051|0.00|0.00|-175.41
      46158051|2014.04.07 14:08:21|buy|2.00|eurchf|1.22086|0.00000|0.00000|1.22051|0.00|0.00|-78.71
      46158107|2014.04.07 14:09:08|sell|0.40|eurusd|1.37287|0.00000|1.37145|1.37245|0.00|0.00|16.80
      46160992|2014.04.07 14:50:01|buy|0.10|eurusd|1.37273|0.00000|1.37323|1.37235|0.00|0.00|-3.80`),
    termTabs: ['Торговля', 'История Счета', 'Новости', 'Алерты', 'Почтовый ящик', 'Маркет', 'Сигналы', 'Библиотека', 'Эксперты', 'Журнал'],
    traffic: '9181/13 kb'
  }
]

const indicators = rows(`
  fxg|95PipsInd_1_3
  fx|Accelerator
  fx|Accumulation
  fx|adaptive Gann High-Low act
  fx|Alligator
  fx|ATR
  fxg|Average Daily Range
  fx|Awesome
  fx|Bands
  fx|Bears
  fx|BetterVolume 1.4
  fxg|Bollinger Bands_Stop_v2
  fx|Bulls
  fxg|Candle Time & Spread`)

const tree = [
  { l: 0, i: 'charts', t: 'RoboForex - MetaTrader 4' },
  { l: 1, x: '−', i: 'users', t: 'Счета' },
  { l: 2, x: '−', i: 'server', t: 'RoboForex-ProCent' },
  { l: 3, i: 'user', t: '744097: Cherevycny Ivan Ivanovich' },
  { l: 1, x: '+', i: 'fx0', t: 'Индикаторы' },
  { l: 1, x: '+', i: 'hat', t: 'Советники' },
  { l: 1, x: '+', i: 'fx', t: 'Пользовательские Индикаторы' },
  { l: 1, x: '+', i: 'script', t: 'Скрипты' }
]

const dataRows = [['Date', '2014.04.07'], ['Time', '10:26'], ['Open', '1.37131'], ['High', '1.37157'], ['Low', '1.37129'], ['Close', '1.37147'], ['Volume', '41']]
const testTabs = ['Настройки', 'Результаты', 'График', 'Отчет', 'Журнал']
const childBtns = [
  ['Свернуть', 'M1 4.500h10v3H1z'],
  ['Развернуть', 'M1.500 1h9v8h-9zM4 4h4v2H4z'],
  ['Закрыть', 'M1.500 1h3L6 3l1.500-2h3L8 5l2.500 4h-3L6 7 4.500 9h-3L4 5z']
]

const mainHead = ['95.570', '95.573', '95.569', '95.573']
const usdHead = ['1.37236', '1.37237', '1.37235', '1.37235']
const chfHead = ['1.22067', '1.22075', '1.22051', '1.22051']

const range = n => Array.from({ length: n }, (_, k) => k)

/* main chart: envelope knots as x, high, low */
const knots = [
  [246, 185, 205], [254, 205, 213], [262, 202, 222], [280, 203, 216], [290, 206, 213], [293, 225, 252], [299, 188, 220], [303, 180, 205], [304, 144, 190], [306, 175, 252], [310, 205, 235], [318, 202, 222], [321, 230, 273], [330, 242, 276], [336, 232, 262], [344, 208, 235], [350, 240, 268], [357, 245, 285], [359, 255, 311], [362, 160, 215], [364, 158, 195], [370, 190, 230], [376, 215, 262], [381, 218, 262], [388, 245, 280], [394, 262, 292], [398, 250, 290], [406, 280, 310], [410, 266, 300], [414, 290, 330], [418, 320, 373], [422, 328, 358], [425, 350, 412], [431, 350, 372], [435, 375, 405], [443, 345, 382], [450, 380, 400], [456, 382, 412], [462, 410, 432], [466, 415, 482], [469, 390, 420], [474, 385, 405], [478, 320, 370], [480, 300, 345], [486, 320, 342], [490, 318, 345], [496, 340, 362], [501, 350, 388], [506, 328, 348], [512, 335, 348], [519, 310, 342], [535, 300, 330], [550, 280, 310], [565, 270, 300], [580, 262, 290], [595, 245, 275], [610, 236, 268], [622, 240, 275], [635, 265, 310], [650, 285, 325], [665, 300, 345], [680, 320, 365], [700, 335, 375], [720, 330, 370], [740, 315, 350], [755, 315, 350], [770, 330, 365], [790, 350, 390], [810, 370, 410], [830, 400, 440], [850, 430, 480], [875, 480, 530], [898, 510, 550], [910, 550, 610], [920, 620, 690], [930, 690, 750], [945, 750, 800], [960, 780, 830], [970, 810, 850], [980, 780, 825], [1000, 745, 790], [1016, 735, 765], [1035, 735, 765], [1055, 705, 740], [1075, 680, 715], [1095, 650, 690], [1115, 630, 665], [1140, 625, 665], [1165, 640, 680], [1180, 600, 650], [1195, 570, 610], [1210, 540, 580], [1225, 520, 560], [1240, 470, 520], [1255, 410, 460], [1265, 440, 480], [1275, 480, 530], [1290, 530, 575], [1298, 550, 592], [1310, 500, 550], [1325, 460, 510], [1345, 445, 490], [1365, 460, 500], [1385, 470, 510],
  [1400, 472, 500], [1408, 485, 525], [1414, 488, 506], [1420, 505, 532], [1428, 505, 525], [1441, 500, 518], [1445, 472, 500], [1451, 450, 468], [1462, 448, 470], [1466, 411, 445], [1471, 430, 461], [1475, 410, 445], [1480, 412, 432], [1484, 425, 443], [1490, 392, 415], [1494, 345, 380], [1497, 312, 355], [1503, 322, 340], [1509, 292, 340], [1514, 305, 325], [1519, 322, 340], [1525, 312, 342], [1530, 313, 335], [1536, 340, 358], [1545, 352, 372], [1548, 395, 424], [1552, 415, 430], [1556, 395, 420], [1560, 370, 405], [1565, 355, 380], [1569, 345, 388], [1572, 325, 360], [1577, 325, 365], [1584, 301, 338], [1590, 316, 352], [1595, 362, 380], [1598, 420, 446], [1606, 445, 465], [1611, 412, 440], [1620, 415, 435], [1628, 430, 452], [1632, 462, 482], [1635, 495, 518], [1640, 493, 508], [1645, 492, 515], [1650, 520, 538], [1656, 515, 530], [1661, 545, 573], [1666, 510, 530], [1669, 508, 530], [1675, 545, 560], [1680, 590, 612], [1683, 605, 640], [1688, 630, 652], [1694, 632, 657], [1700, 623, 660], [1706, 645, 672], [1710, 670, 700], [1715, 725, 770], [1722, 755, 802], [1726, 735, 768], [1728, 700, 730], [1733, 715, 742], [1737, 715, 748], [1741, 693, 720], [1748, 682, 715], [1756, 676, 692], [1762, 685, 713], [1769, 700, 735], [1773, 735, 788], [1778, 785, 828], [1783, 775, 805], [1786, 760, 775], [1792, 735, 760], [1797, 707, 730], [1803, 718, 732], [1809, 707, 722], [1813, 702, 735], [1818, 750, 772], [1822, 765, 788], [1827, 740, 765], [1834, 745, 758], [1840, 742, 765], [1844, 722, 745], [1850, 742, 763], [1857, 730, 752], [1866, 736, 750], [1870, 745, 770], [1874, 770, 779]
]
let seed = 7
const rnd = () => (seed = (seed * 16807) % 2147483647) / 2147483647
function envelope(list) {
  let d = ''
  let i = 0
  let walk = 0
  for (let x = list[0][0]; x <= list[list.length - 1][0]; x += 2) {
    while (i < list.length - 2 && list[i + 1][0] < x) i++
    const [xa, ha, la] = list[i]
    const [xb, hb, lb] = list[i + 1]
    const k = Math.min(1, (x - xa) / (xb - xa))
    const wide = xb - xa >= 9
    walk = wide ? walk * 0.88 + (rnd() - 0.5) * 17 : walk * 0.6
    const hi = ha + (hb - ha) * k + walk
    const lo = la + (lb - la) * k + walk
    const s = (lo - hi) * (wide ? 0.52 : 0.4)
    d += `M${x + 0.5} ${Math.round(hi + rnd() * s)}V${Math.round(lo - rnd() * s) + 1}`
  }
  return d
}
const mainBars = envelope(knots)
const mainGrid = range(51).map(k => `M${278.5 + k * 32} 102V884`).join('') + range(24).map(k => `M247 ${Math.round(116 + k * 33.09) + 0.5}H1878`).join('')
const mainTicks = range(24).map(k => `M1879 ${Math.round(116 + k * 33.09) + 0.5}h2`).join('') + range(26).map(k => `M${246.5 + k * 64} 885v3`).join('')
const mainPrices = range(24).map(k => (96.07 - k * 0.025).toFixed(3))
const mainTimes = range(26).map(k => {
  const m = 125 + k * 32
  return k ? `7 Apr ${String(Math.floor(m / 60)).padStart(2, '0')}:${String(m % 60).padStart(2, '0')}` : '7 Apr 2014'
})
const deals = [[1509, 342, '#e01010'], [1667, 504, '#1010d0'], [1727, 701, '#1010d0'], [1261, 448, '#e01010'], [1223, 539, '#e01010'], [1196, 602, '#e01010'], [1098, 673, '#e01010'], [1014, 739, '#e01010']]

const rule = '='.repeat(42)
const adr = [
  [250, 777, 'Label'], [250, 789, 'Label'], [250, 800, rule],
  [250, 810, 'ADR:'], [294, 810, '5 days'], [339, 810, 'Yesterday'], [396, 810, 'Weekly'], [441, 810, 'Monthly'], [490, 810, '180 Days'],
  [250, 822, 'Pips:'], [294, 822, '64'], [339, 822, '71'], [396, 822, '64'], [441, 822, '90'], [490, 822, '101'],
  [250, 833, rule],
  [250, 843, 'Today High:'], [357, 843, '96.049'], [402, 843, 'ADR High:'], [500, 843, '96.208'],
  [250, 855, 'Today Low:'], [357, 855, '95.509'], [402, 855, 'ADR Low:'], [500, 855, '95.564'],
  [250, 867, 'Pips to Today High:'], [357, 867, '46'], [402, 867, 'Pips to ADR High:'], [500, 867, '62'],
  [250, 879, 'Pips to Today Low:'], [357, 879, '6'], [402, 879, 'Pips to ADR Low:'], [500, 879, '1']
]

/* EURUSD: open, high, low, close in points above 1.37000 */
const ohlc = [
  [253, 256, 252, 253], [252, 253, 242, 247], [245, 246, 235, 235], [235, 239, 222, 222], [222, 232, 220, 227], [227, 232, 225, 230], [229, 238, 221, 232], [231, 238, 225, 236],
  [236, 243, 236, 240], [240, 266, 240, 248], [247, 248, 235, 236], [236, 241, 236, 238], [237, 241, 235, 238], [239, 243, 237, 241], [241, 247, 235, 235], [233, 234, 228, 234],
  [237, 238, 234, 236], [236, 239, 234, 236], [236, 236, 229, 230], [232, 233, 229, 229], [228, 228, 212, 222], [222, 223, 212, 217], [217, 227, 212, 225], [225, 231, 222, 223],
  [222, 226, 210, 214], [214, 222, 210, 221], [226, 226, 221, 222], [222, 233, 221, 232], [232, 245, 231, 245], [244, 245, 237, 237], [236, 237, 235, 235]
]
const py = p => Math.round(229 + (265 - p) * 8.38) + 0.5
const eurusdBars = ohlc.map(([o, h, l, c], k) => {
  const x = 2391.5 + k * 8
  return `M${x} ${py(h)}V${py(l)}M${x - 2} ${py(o)}h2M${x} ${py(c)}h3`
}).join('')
const eurusdGrid = range(9).map(k => `M${2423.5 + k * 32} 187V640`).join('') + range(10).map(k => `M2392 ${Math.round(229 + k * 41.9) + 0.5}H2712`).join('')
const eurusdTicks = range(10).map(k => `M2713 ${Math.round(229 + k * 41.9) + 0.5}h2`).join('')
const eurusdPrices = ['1.37265', '1.37260', '1.37255', '1.37250', '1.37245', '1.37240', '', '1.37230', '1.37225', '1.37220']

/* EURCHF: high, low per bar, in thirds of a pixel */
const hl = [
  495, 610, 505, 610, 520, 625, 540, 620, 530, 600, 540, 600, 530, 590, 410, 620, 430, 620, 390, 590, 375, 590, 450, 625, 410, 600, 460, 625, 545, 585, 540, 600, 560, 610, 540, 610, 520, 570, 550, 605, 540, 580,
  575, 610, 595, 640, 610, 640, 620, 705, 670, 705, 660, 700, 640, 670, 600, 645, 590, 620, 580, 625, 615, 700, 580, 680, 505, 605, 498, 515, 505, 540, 520, 545, 520, 555, 500, 550, 498, 560, 500, 560, 530, 560,
  560, 615, 575, 605, 550, 605, 530, 570, 530, 565, 530, 615, 560, 695, 600, 697, 560, 690, 610, 670, 610, 670, 610, 640, 555, 660, 550, 625, 575, 640, 620, 700, 655, 720, 630, 725, 590, 640, 590, 640, 575, 640,
  575, 680, 640, 690, 670, 790, 770, 895, 840, 935, 855, 900, 855, 935, 920, 980, 825, 985, 840, 892
]
const ty = v => Math.round(140 + v / 3)
const eurchfBars = range(hl.length / 2).map(k => {
  const x = 2773.5 + k * 4
  const h = hl[k * 2]
  const l = hl[k * 2 + 1]
  return `M${x} ${ty(h)}V${ty(l)}M${x} ${ty(h + (l - h) * (k % 3 ? 0.3 : 0.7)) + 0.5}h2`
}).join('')
const eurchfGrid = range(11).map(k => `M${2805.5 + k * 32} 190V604`).join('') + range(9).map(k => `M2774 ${Math.round(224 + k * 33.7) + 0.5}H3145`).join('') + 'M2774 522.5H3145M2774 552.5H3145M2774 583.5H3145'
const eurchfTicks = range(9).map(k => `M3146 ${Math.round(224 + k * 33.7) + 0.5}h2`).join('') + range(5).map(k => `M${2773.5 + k * 64} 605v3`).join('')
const eurchfPrices = range(9).map(k => (1.22335 - k * 0.00045).toFixed(5))
const fast = [1230, 1190, 1210, 1225, 1250, 1250, 1262, 1178, 1200, 1270, 1335, 1325, 1285, 1268, 1275, 1308, 1310, 1305, 1285, 1265, 1265, 1285, 1330, 1355, 1361, 1360, 1350, 1290, 1210, 1135, 1133, 1230, 1230, 1170, 1110, 1110, 1125, 1145, 1180, 1210, 1235, 1290, 1335, 1350, 1320, 1260, 1220, 1220, 1270, 1290, 1290, 1270, 1262, 1255, 1225, 1225, 1245, 1300, 1362, 1335, 1270, 1200, 1150, 1200, 1290, 1345, 1365, 1362, 1350, 1345, 1355, 1322]
const slow = fast.map((v, k) => (v + fast[Math.max(0, k - 1)] + fast[Math.max(0, k - 2)] + fast[Math.max(0, k - 3)]) / 4)
const line = a => 'M' + a.map((v, k) => `${2773 + k * 4} ${ty(v)}`).join('L')
const stochFast = line(fast)
const stochSlow = line(slow)
const heat = ['#3076e8', '#2f92f5', '#2fa4f5', '#25dcee', '#25e8ee', '#2cf0a8', '#4ff05a', '#78ee3a', '#a4ee3a', '#c8f03a', '#f4f03a', '#fff03a', '#ffd93a', '#ffb53a']
const meters = [[6, 530, 5], [12, 540, 10], [14, 561, 4], [8, 570, 10]].flatMap(([n, y, h]) => range(n).map(k => ({ x: 2986 + k * 7, y, h, f: heat[k] })))
const spots = [[2935, 319], [2975, 345], [3019, 332], [3010, 350]]
const comments = ['Ордеров Sell: 2', 'Ордеров Buy: 0', 'Макс. Вол. День: 433', 'Шаг сетки: 28', 'GridSellSL: 0', 'GridBuySL: 0', 'Спред: 22', 'Lastselllot 2,08', 'Lastbuylot 0', 'Ошибок: 0', 'firstlot 0.01', 'res1 0', 'res2 1.2228', 'res3 30', 'res4 40', 'sup1 1.2188', 'sup2 0', 'sup3 0', 'sup4 0']
const chfTimes = ['4 Apr 2014', '7 Apr 01:30', '7 Apr 05:30', '7 Apr 09:30', '7 Apr 13:30']
</script>

<style>
html, body { background: #000; }
</style>

<style scoped>
.sprite { display: none; }
.desktop, .desktop * { box-sizing: border-box; }
.desktop {
  display: grid;
  grid-template-columns: 3fr 2fr;
  height: 100vh;
  min-height: 900px;
  overflow: hidden;
  background: #000;
  font: 11px/14px "Open Sans", "Noto Sans", sans-serif;
  color: #000;
}
.slot { display: flex; min-width: 0; min-height: 0; }
.slot + .slot { padding-bottom: 56px; }
.app { flex: 1; display: flex; flex-direction: column; min-width: 0; min-height: 0; background: #f0f0f0; border-bottom: 2px solid #6f9cc8; }
.left { border-right: 1px solid #f8f8f8; }
button, input, select { font: inherit; color: inherit; margin: 0; }
button { display: flex; align-items: center; justify-content: center; padding: 0; border: 0; background: none; white-space: nowrap; }
h1, h2, h3 { margin: 0; font-weight: normal; }
i, em { font-style: normal; }

.titlebar { display: flex; align-items: center; height: 23px; background: #6babf7; border-bottom: 1px solid #5a8fd0; color: #1a2a40; }
.right .titlebar { background: #ebebeb; border-color: #e0e0e0; }
.logo { width: 110px; padding-left: 2px; line-height: 0; }
.titlebar h1 { flex: 1; text-align: center; font-size: 15px; line-height: 22px; }
.wbtns { display: flex; align-self: flex-start; height: 19px; width: 112px; }
.wbtns button { width: 25px; height: 19px; }
.wbtns button:first-child { margin-left: 14px; }
.left .wbtns .shut { width: 45px; background: #c75050; color: #fff; }
.right .wbtns .shut { width: 45px; }

.menu { display: flex; align-items: center; gap: 17px; height: 22px; padding: 0 1px 2px 5px; border-bottom: 1px solid #a0a0a0; box-shadow: inset 0 1px #fff; font-size: 11px; }
.menu > svg { margin-right: -10px; }
.right .menu { color: #8c8c8c; padding-left: 8px; }
.mdi { margin-left: auto; display: flex; gap: 2px; }
.mdi button { width: 17px; height: 17px; border: 1px solid #9fb4cc; background: #dfeaf6; }

.band { display: flex; height: 27px; }
.bar { display: flex; align-items: center; height: 27px; padding: 0 2px 0 2px; border: solid #a0a0a0; border-width: 0 2px 1px 0; border-right-color: #b0b0b0; box-shadow: inset 0 1px #fff; }
.std { width: 482px; }
.draw { width: 304px; }
.left .view { margin-left: 452px; border-left: 1px solid #a0a0a0; }
.left .tf { margin-left: 704px; border-left: 1px solid #a0a0a0; }
.grip { width: 3px; height: 20px; margin-right: 3px; background: repeating-linear-gradient(#a8a8a8 0 1px, #f0f0f0 1px 2px); }
.bar button { width: 26px; height: 24px; margin-right: 2px; border: 1px solid transparent; gap: 4px; flex: none; }
.bar button.on { background: #f9f9f9; border-color: #a0a0a0 #fff #fff #a0a0a0; }
.bar button.caret { width: 35px; }
.bar button.wide { width: auto; padding: 0 3px; gap: 5px; font-size: 11px; }
.bar button.order { padding: 0 0 0 6px; }
.draw button span { font-weight: bold; color: #555; font-size: 12px; }
.tf button span { font-family: "DejaVu Sans Condensed", "Open Sans", sans-serif; font-size: 10px; color: #444; }
.sep { width: 1px; height: 20px; margin: 0 3px 0 1px; background: #a0a0a0; }
.glyph { font: bold 6px "Liberation Sans", sans-serif; fill: #4d4d4d; }
.search { display: flex; margin: 1px 2px 0 auto; height: 22px; border: 1px solid #b5b5b5; background: #e8ecf2; }
.search button { width: 21px; border-left: 1px solid #c0c0c0; }
.search .drop { width: 16px; background: #f4f4f4; border: 0; }
.search input { width: 113px; border: 0; padding: 0 4px; background: #fff; outline: 0; }
.search .chat { width: 29px; }
.search .chat b { width: 16px; height: 12px; background: #5f7fae; color: #fff; font-size: 9px; line-height: 12px; }

.work { flex: 1; display: flex; min-height: 0; }
.dock { width: 242px; display: flex; flex-direction: column; border-right: 1px solid #a0a0a0; }
.right .dock { width: 264px; }
.panel { display: flex; flex-direction: column; min-height: 0; padding: 0 5px 3px 3px; border-top: 1px solid #fff; border-bottom: 1px solid #a0a0a0; }
.left .watch { flex: 532 1 0; }
.left .navi { flex: 282 1 0; }
.right .watch { flex: 303 1 0; }
.right .navi { flex: 187 1 0; }
.panel h2 { display: flex; flex: none; height: 14px; font: 11px/14px "DejaVu Sans Condensed", "Open Sans", sans-serif; color: #10253c; }
.panel h2 span { flex: 1; padding-left: 2px; background: linear-gradient(90deg, #bccde0, #d6e4f2); }
.panel h2 button { width: 14px; font: bold 13px/12px "DejaVu Sans", sans-serif; color: #000; }
.body { flex: 1; min-height: 0; overflow: hidden; background: #fff; border: 1px solid #888; border-bottom: 0; border-right-color: #ddd; }
.scrolls { display: flex; }
.clip { flex: 1; overflow: hidden; min-width: 0; background: #effdef; }
table { border-collapse: collapse; table-layout: fixed; width: 100%; }
td, th { padding: 0; height: 20px; font-weight: normal; overflow: hidden; white-space: nowrap; text-align: right; }
.grid th { height: 24px; background: #fcfcfc; border-right: 1px solid #e6eef6; border-bottom: 1px solid #c0c0c0; padding: 0 4px; }
.grid td { background: #effdef; border: solid #c0c0c0; border-width: 0 1px 1px 0; padding-right: 2px; }
.grid td:last-child, .grid th:last-child { padding-right: 4px; border-right: 0; }
.grid th:first-child { text-align: left; padding-left: 6px; }
.grid td:first-child { text-align: left; padding-left: 3px; }
.grid td svg { vertical-align: -2px; margin-right: 5px; }
.grid .c1 { width: 91px; } .grid .c2 { width: 62px; }
.right .grid .c1 { width: 101px; } .right .grid .c2 { width: 68px; }
.up td + td { color: #1414d0; }
.down td + td { color: #d01414; }
.vscroll { width: 16px; flex: none; display: flex; flex-direction: column; align-items: center; justify-content: space-between; background: #f0f0f0; padding: 5px 0; position: relative; }
.vscroll svg path { fill: none; stroke: #505050; stroke-width: 2; }
.thumb { position: absolute; left: 0; right: 1px; top: 16px; height: 205px; background: #cdcdcd; }
.right .watch .thumb { top: 36px; height: 56px; }
.left .navi .thumb { top: 52px; height: 25px; }
.left .tablewrap .thumb { top: 16px; height: 58px; }
.right .tablewrap .thumb { top: 18px; height: 153px; }
.tabs { display: flex; flex: none; height: 20px; border-top: 1px solid #000; padding-left: 2px; font-size: 11px; color: #6d6d6d; }
.tabs button { height: 14px; margin-top: 3px; padding: 0 9px; border-right: 1px solid #6d6d6d; }
.tabs .cur { height: 18px; margin-top: -1px; background: #fff; color: #000; border: solid #000; border-width: 0 2px 2px 1px; }
.toolbox .tabs button { padding: 0 8px; }
.tabs sub { color: #e02020; font: bold 8px/8px "DejaVu Sans", sans-serif; margin: 4px 0 0 2px; }

.tree { flex: 1; min-width: 0; margin: 0; padding: 0; list-style: none; overflow: hidden; white-space: nowrap; }
.tree li { display: flex; align-items: center; height: 18px; gap: 6px; padding-left: 20px; }
.tree svg, .box { flex: none; }
.flat { background: linear-gradient(90deg, transparent 12px, #999 12px 13px, transparent 13px 34px, #999 34px 35px, transparent 35px); }
.flat li { padding-left: 47px; background: repeating-linear-gradient(90deg, #999 0 1px, #fff 1px 2px) 35px 9px / 10px 1px no-repeat; }
.tree .lv0 { padding-left: 6px; } .tree .lv1 { padding-left: 9px; } .tree .lv2 { padding-left: 30px; } .tree .lv3 { padding-left: 69px; }
.tree li:first-child { margin-top: 1px; }
.box { width: 9px; height: 9px; border: 1px solid #8d9aa8; font-size: 9px; line-height: 7px; text-align: center; color: #2a4a7a; margin-right: 2px; }

.datawin { width: 197px; border-right: 1px solid #a0a0a0; padding-left: 3px; border-left: 1px solid #fff; }
.data th { height: 21px; text-align: left; background: #ebebeb; padding-left: 2px; border-bottom: 1px solid #c0c0c0; }
.data th svg { vertical-align: -3px; margin-right: 3px; }
.data td { border-bottom: 1px solid #c0c0c0; border-left: 1px solid #c0c0c0; padding-right: 4px; }
.data td:first-child { width: 100px; text-align: left; padding-left: 20px; border-left: 0; }
.data tr:nth-child(even) td { background: #ebebeb; }

.stage { flex: 1; min-width: 0; display: flex; flex-direction: column; }
.left .stage { padding-left: 1px; }
.solo { flex: 1; min-height: 0; margin-right: 1px; background: #000; overflow: hidden; }
.chart { display: block; background: #000; shape-rendering: crispEdges; }
.gl { stroke: #6f7c88; stroke-dasharray: 3 3; fill: none; }
.px { stroke: #32dc32; fill: none; }
.tx { font: 9px "DejaVu Sans Condensed", "Open Sans", sans-serif; fill: #fff; }
.tx .dk { fill: #000; }
.lvl { font: 11px "DejaVu Sans Condensed", "Open Sans", sans-serif; fill: #9a3478; }
.adr { font: 10px "DejaVu Sans Condensed", "Open Sans", sans-serif; fill: #c8982e; }
.big { font: 12px "DejaVu Sans Condensed", "Open Sans", sans-serif; }
.sd { color: #e01010; }
.charts { margin-top: 2px; padding-left: 1px; overflow: hidden; border-left: 1px solid #888; position: relative; }
.charts button { flex: none; width: 88px; padding: 0; }
.charts .short { width: 80px; }
.charts .long { width: 104px; }
.charts .arr { position: absolute; right: 2px; top: 5px; background: #f0f0f0; padding-left: 6px; line-height: 0; }
.mdiarea { flex: 1; min-height: 0; position: relative; overflow: hidden; background: #ababab; border-left: 1px solid #777; border-top: 1px solid #777; }
.child { position: absolute; display: flex; flex-direction: column; background: #d6e4f1; border: 1px solid #5a6470; border-radius: 5px 5px 0 0; padding: 0 8px 8px 4px; }
.w1 { left: 0; top: 0; width: 381px; height: 520px; padding-right: 7px; }
.w2 { left: 382px; top: 2px; width: 434px; height: 478px; }
.child header { display: flex; align-items: center; height: 30px; flex: none; padding-top: 2px; background: linear-gradient(#bccbdb, #d6e4f1); margin: 0 -4px; padding-left: 5px; }
.child h3 { flex: 1; text-align: center; font-size: 15px; line-height: 20px; }
.cb { display: flex; gap: 2px; padding-right: 4px; }
.cb button { width: 32px; height: 18px; border: 1px solid #8ba0b8; background: #cfdeee; }
.cb path { fill: #fff; stroke: #4d5a68; fill-rule: evenodd; }

.toolbox { display: flex; flex: none; border-top: 1px solid #fff; border-bottom: 1px solid #a0a0a0; padding: 4px 4px 3px 1px; }
.side { width: 14px; display: flex; flex-direction: column; }
.side button { height: 14px; font: bold 13px/12px "DejaVu Sans", sans-serif; }
.side h2 { flex: 1; display: flex; writing-mode: vertical-rl; transform: rotate(180deg); align-items: center; font: 11px/13px "DejaVu Sans Condensed", "Open Sans", sans-serif; background: linear-gradient(#b8cadd, #d6e4f2); padding-top: 2px; }
.main { flex: 1; min-width: 0; border: solid #888; border-width: 1px 0 0 1px; }
.tablewrap { background: #fff; padding-bottom: 1px; }
.orders { flex: 1; }
.orders th { height: 24px; background: #fcfcfc; border-right: 1px solid #e6eef6; border-bottom: 1px solid #c0c0c0; padding-right: 4px; }
.orders td { border: solid #c0c0c0; border-width: 0 1px 1px 0; padding-right: 2px; }
.orders th:last-child { padding-right: 6px; }
.orders td:last-child { padding-right: 7px; border-right: 0; }
.orders th:first-child { text-align: left; padding-left: 6px; }
.orders td:first-child { text-align: left; padding-left: 3px; }
.orders td > svg { vertical-align: -4px; margin-right: 8px; }
.left .orders tbody tr:nth-child(even) td, .right .orders tbody tr:nth-child(even) td { background: #ebebeb; }
.orders tbody tr.sel td, .right .orders tbody tr.sel td { background: #3399ff; color: #fff; }
.orders tbody tr td.hit, .right .orders tbody tr td.hit { background: #62f062; color: #000; }
.slash { margin-left: 12px; color: #888; }
.del { display: inline-flex; vertical-align: -2px; margin-left: 10px; }
.del path { stroke: #999; stroke-width: 2; }

.form { display: grid; grid-template-columns: 120px minmax(0, 786px) 1fr 90px 150px; gap: 7px 2px; padding: 3px; background: #fff; color: #6d6d6d; font-family: "Liberation Sans", sans-serif; align-items: center; }
.form label { text-align: right; padding-right: 2px; }
.form .ex { grid-column: 2 / 5; }
.form select { appearance: none; width: 100%; height: 21px; border: 1px solid #d8d8d8; border-radius: 0; background-color: #eee; color: #6d6d6d; padding: 0 3px; opacity: 1; background-image: linear-gradient(45deg, transparent 46%, #aaa 46% 60%, transparent 60%), linear-gradient(-45deg, transparent 46%, #aaa 46% 60%, transparent 60%); background-size: 5px 5px; background-position: right 9px center, right 5px center; background-repeat: no-repeat; }
.form button { height: 21px; border: 1px solid #a0a0a0; background: #f0f0f0; color: #6d6d6d; }
.form .stop { color: #000; font-weight: bold; font-size: 12px; margin-top: 2px; }
.progress { grid-column: 1 / 5; height: 16px; border: 1px solid #bcbcbc; background: #e6e6e6; margin-left: -1px; }
.progress i { display: block; width: 77%; height: 100%; background: linear-gradient(90deg, #06b025 25%, #6fe070 38%, #74e276 40%, #06b025 53%); }
.tester .tabs { height: 18px; margin-bottom: 2px; }

.status { display: flex; flex: none; height: 19px; align-items: stretch; border-top: 1px solid #fff; line-height: 20px; font-size: 11px; }
.help { flex: 1; padding-left: 2px; }
.cell { border-left: 1px solid #a0a0a0; margin-top: 3px; padding-left: 5px; line-height: 16px; width: 70px; }
.def { width: 115px; }
.s1 { width: 103px; }
.s6 { width: 66px; }
.net { display: flex; width: 161px; align-items: center; }
.net em { flex: 1; text-align: center; }
</style>
